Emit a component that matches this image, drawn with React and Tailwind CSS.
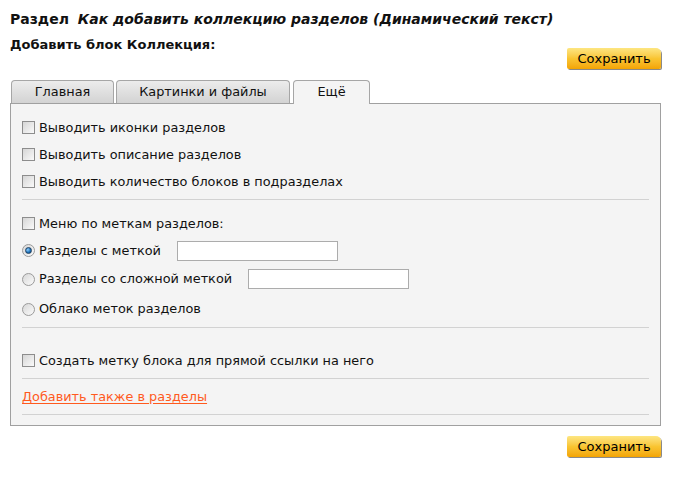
import React from "react";

const Checkbox = () => (
  <span className="inline-block w-[13px] h-[13px] border border-[#8d8d8d] bg-gradient-to-br from-[#d6d6d6] to-[#fafafa] shrink-0" />
);

const Radio = ({ checked }) => (
  <span className="inline-flex items-center justify-center w-[13px] h-[13px] rounded-full border border-[#9a9a9a] bg-gradient-to-br from-[#d8d8d8] to-[#fbfbfb] shrink-0">
    {checked && (
      <span className="w-[7px] h-[7px] rounded-full bg-[radial-gradient(circle_at_35%_35%,#8fd0ff,#1a6db5_60%,#0d3f70)] border border-[#204060]" />
    )}
  </span>
);

const SaveButton = () => (
  <button className="w-[94px] h-[21px] rounded-[2px] rounded-tr-[5px] bg-gradient-to-b from-[#fde680] via-[#f9c531] to-[#f3a400] shadow-[1px_1px_0_#8a8a8a] text-[13px] text-black leading-none">
    Сохранить
  </button>
);

const CheckRow = ({ text, className = "" }) => (
  <label className={"flex items-center gap-[4px] h-[27px] " + className}>
    <Checkbox />
    <span>{text}</span>
  </label>
);

const Sep = () => <div className="h-px bg-[#d2d2d2]" />;

export default function App() {
  return (
    <div className="w-[682px] h-[478px] bg-white font-['DejaVu_Sans',Verdana,sans-serif] text-[12.85px] text-[#111] pl-[10px] pr-[21px]">
      <div className="pt-[10px] text-[14px] font-bold leading-[18px]">
        Раздел <i className="ml-[4px]">Как добавить коллекцию разделов (Динамический текст)</i>
      </div>
      <div className="flex justify-between items-start">
        <div className="mt-[8px] font-bold text-[13px] leading-[18px]">Добавить блок Коллекция:</div>
        <div className="mt-[20px]">
          <SaveButton />
        </div>
      </div>

      <div className="flex items-end gap-[2px] mt-[11px] pl-[1px] h-[23px]">
        <div className="w-[103px] h-[23px] flex items-center justify-center rounded-t-[4px] border border-b-0 border-[#a6a6a6] bg-gradient-to-b from-[#ececec] to-[#d3d3d3]">
          Главная
        </div>
        <div className="w-[174px] h-[23px] flex items-center justify-center rounded-t-[4px] border border-b-0 border-[#a6a6a6] bg-gradient-to-b from-[#ececec] to-[#d3d3d3]">
          Картинки и файлы
        </div>
        <div className="w-[77px] h-[24px] ml-[1px] flex items-center justify-center rounded-t-[4px] border border-b-0 border-[#a6a6a6] bg-[#f4f4f4] relative top-[1px] pb-[1px]">
          Ещё
        </div>
      </div>

      <div className="border border-[#a0a0a0] bg-[#f4f4f4] px-[11px] h-[323px]">
        <div className="pt-[10px] pb-[4px]">
          <CheckRow text="Выводить иконки разделов" />
          <CheckRow text="Выводить описание разделов" />
          <CheckRow text="Выводить количество блоков в подразделах" />
        </div>
        <Sep />
        <div className="pt-[10px] pb-[3px]">
          <CheckRow text="Меню по меткам разделов:" className="h-[27px]" />
          <label className="flex items-center gap-[4px] h-[27px]">
            <Radio checked />
            <span>Разделы с меткой</span>
            <input className="ml-[12px] w-[161px] h-[20px] border border-[#acacac] bg-white" />
          </label>
          <label className="flex items-center gap-[4px] h-[30px]">
            <Radio />
            <span>Разделы со сложной меткой</span>
            <input className="ml-[12px] w-[161px] h-[20px] border border-[#acacac] bg-white" />
          </label>
          <label className="flex items-center gap-[4px] h-[30px]">
            <Radio />
            <span>Облако меток разделов</span>
          </label>
        </div>
        <Sep />
        <div className="pt-[19px] pb-[4px]">
          <CheckRow text="Создать метку блока для прямой ссылки на него" />
        </div>
        <Sep />
        <div className="h-[35px] flex items-center">
          <a href="#" className="text-[#ff5a1e] underline underline-offset-[2px]">
            Добавить также в разделы
          </a>
        </div>
        <Sep />
      </div>

      <div className="flex justify-end mt-[10px]">
        <SaveButton />
      </div>
    </div>
  );
}
